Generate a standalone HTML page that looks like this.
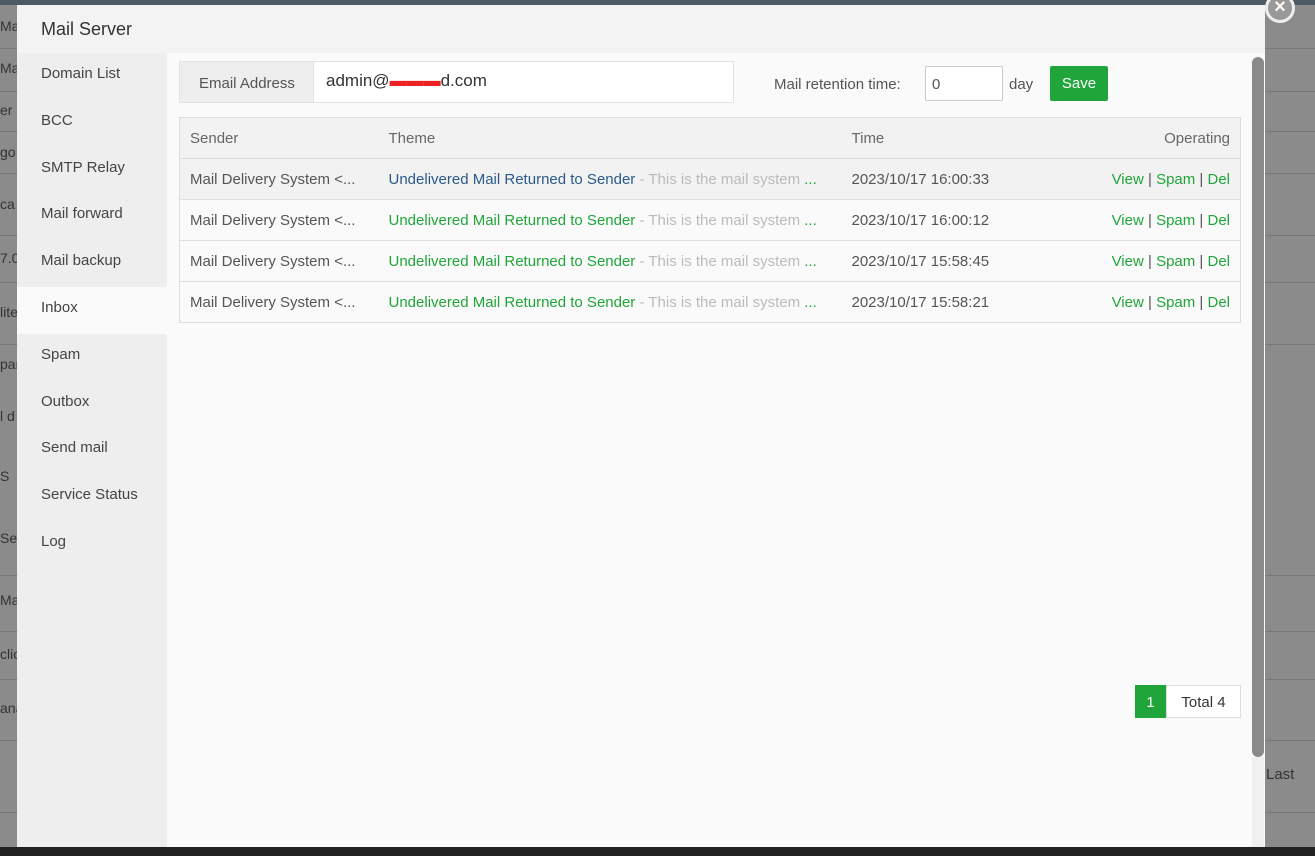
<!DOCTYPE html>
<html><head><meta charset="utf-8"><style>
*{box-sizing:border-box;margin:0;padding:0}
body{width:1315px;height:856px;overflow:hidden;background:#8b8b8b;font-family:"Liberation Sans",sans-serif;font-size:15px;color:#555;position:relative}
.top{position:absolute;left:0;top:0;width:1315px;height:5px;background:#4c5a66}
.bot{position:absolute;left:0;top:847px;width:1315px;height:9px;background:#222}
.hl{position:absolute;left:0;width:1315px;height:1px;background:#777}
.lt{position:absolute;left:0;color:#333;font-size:14px;white-space:nowrap}
.modal{position:absolute;left:17px;top:5px;width:1248px;height:842px;background:#fafafa}
.title{position:absolute;left:0;top:0;width:1248px;height:48px;background:#f3f3f3;font-size:18px;color:#333;padding:14px 0 0 24px}
.side{position:absolute;left:0;top:48px;width:150px;height:794px;background:#eee}
.side div{height:46.8px;line-height:42px;padding-left:24px;color:#444;font-size:15px}
.side .act{background:#fafafa}
.abs{position:absolute}
.g{color:#20a53a}
table{border-collapse:collapse;width:1062px;position:absolute;left:162px;top:112px;border:1px solid #ddd}
td,th{height:41px;padding:0 10px;border-top:1px solid #ddd;font-weight:normal;text-align:left;white-space:nowrap;font-size:15px}
th{background:#f2f2f2;color:#666}
.close{position:absolute;left:1248px;top:-12px;width:30px;height:30px;border-radius:50%;background:#999;border:3px solid #eee;color:#fff;text-align:center;line-height:22px;font-size:20px;font-weight:bold}
</style></head><body>
<div class="top"></div>
<div class="hl" style="top:48px"></div><div class="hl" style="top:91px"></div><div class="hl" style="top:131px"></div><div class="hl" style="top:173px"></div><div class="hl" style="top:235px"></div><div class="hl" style="top:282px"></div><div class="hl" style="top:344px"></div><div class="hl" style="top:575px"></div><div class="hl" style="top:631px"></div><div class="hl" style="top:679px"></div><div class="hl" style="top:740px"></div><div class="hl" style="top:812px"></div>
<div class="lt" style="top:18px">Ma</div><div class="lt" style="top:60px">Ma</div><div class="lt" style="top:102px">er</div><div class="lt" style="top:144px">go</div><div class="lt" style="top:196px">ca</div><div class="lt" style="top:250px">7.0</div><div class="lt" style="top:304px">lite</div><div class="lt" style="top:356px">pan</div><div class="lt" style="top:408px">l d</div><div class="lt" style="top:468px">S</div><div class="lt" style="top:530px">Ser</div><div class="lt" style="top:592px">Ma</div><div class="lt" style="top:646px">clic</div><div class="lt" style="top:700px">ana</div>
<div class="lt" style="left:1266px;top:766px;font-size:15px">Last</div>
<div class="bot"></div>
<div class="modal">
<div class="title">Mail Server</div>
<div class="side">
<div>Domain List</div><div>BCC</div><div>SMTP Relay</div><div>Mail forward</div><div>Mail backup</div><div class="act">Inbox</div><div>Spam</div><div>Outbox</div><div>Send mail</div><div>Service Status</div><div>Log</div>
</div>
<div class="abs" style="left:162px;top:56px;width:135px;height:42px;background:#eee;border:1px solid #e2e2e2;line-height:44px;padding-left:19px;color:#555">Email Address</div>
<div class="abs" style="left:296px;top:56px;width:421px;height:42px;background:#fff;border:1px solid #e2e2e2;line-height:38px;padding-left:12px;color:#333;font-size:17px">admin@<span style="color:#e22">▬▬▬</span>d.com</div>
<div class="abs" style="left:757px;top:71px;color:#555">Mail retention time:</div>
<div class="abs" style="left:908px;top:61px;width:78px;height:35px;background:#fff;border:1px solid #ccc;border-radius:2px;line-height:35px;padding-left:6px;color:#555">0</div>
<div class="abs" style="left:992px;top:71px;color:#555">day</div>
<div class="abs" style="left:1033px;top:61px;width:58px;height:35px;background:#20a53a;border-radius:2px;color:#fff;text-align:center;line-height:36px">Save</div>
<table>
<tr><th style="width:199px">Sender</th><th style="width:463px">Theme</th><th>Time</th><th style="text-align:right">Operating</th></tr>
<tr style="background:#f2f2f2"><td>Mail Delivery System &lt;...</td><td><span style="color:#2a5a8a">Undelivered Mail Returned to Sender</span><span style="color:#bbb"> - This is the mail system </span><span class="g">...</span></td><td>2023/10/17 16:00:33</td><td style="text-align:right"><span class="g">View</span> | <span class="g">Spam</span> | <span class="g">Del</span></td></tr>
<tr><td>Mail Delivery System &lt;...</td><td><span class="g">Undelivered Mail Returned to Sender</span><span style="color:#bbb"> - This is the mail system </span><span class="g">...</span></td><td>2023/10/17 16:00:12</td><td style="text-align:right"><span class="g">View</span> | <span class="g">Spam</span> | <span class="g">Del</span></td></tr>
<tr><td>Mail Delivery System &lt;...</td><td><span class="g">Undelivered Mail Returned to Sender</span><span style="color:#bbb"> - This is the mail system </span><span class="g">...</span></td><td>2023/10/17 15:58:45</td><td style="text-align:right"><span class="g">View</span> | <span class="g">Spam</span> | <span class="g">Del</span></td></tr>
<tr><td>Mail Delivery System &lt;...</td><td><span class="g">Undelivered Mail Returned to Sender</span><span style="color:#bbb"> - This is the mail system </span><span class="g">...</span></td><td>2023/10/17 15:58:21</td><td style="text-align:right"><span class="g">View</span> | <span class="g">Spam</span> | <span class="g">Del</span></td></tr>
</table>
<div class="abs" style="left:1118px;top:680px;width:31px;height:33px;background:#20a53a;color:#fff;text-align:center;line-height:35px">1</div>
<div class="abs" style="left:1149px;top:680px;width:75px;height:33px;background:#fff;border:1px solid #ddd;text-align:center;line-height:33px;color:#333">Total 4</div>
<div class="abs" style="left:1235px;top:52px;width:12px;height:700px;background:#8a8a8a;border-radius:6px"></div>
<div class="abs" style="left:1235px;top:752px;width:12px;height:90px;background:#f0f0f0"></div>
<div class="close">×</div>
</div>
</body></html>
